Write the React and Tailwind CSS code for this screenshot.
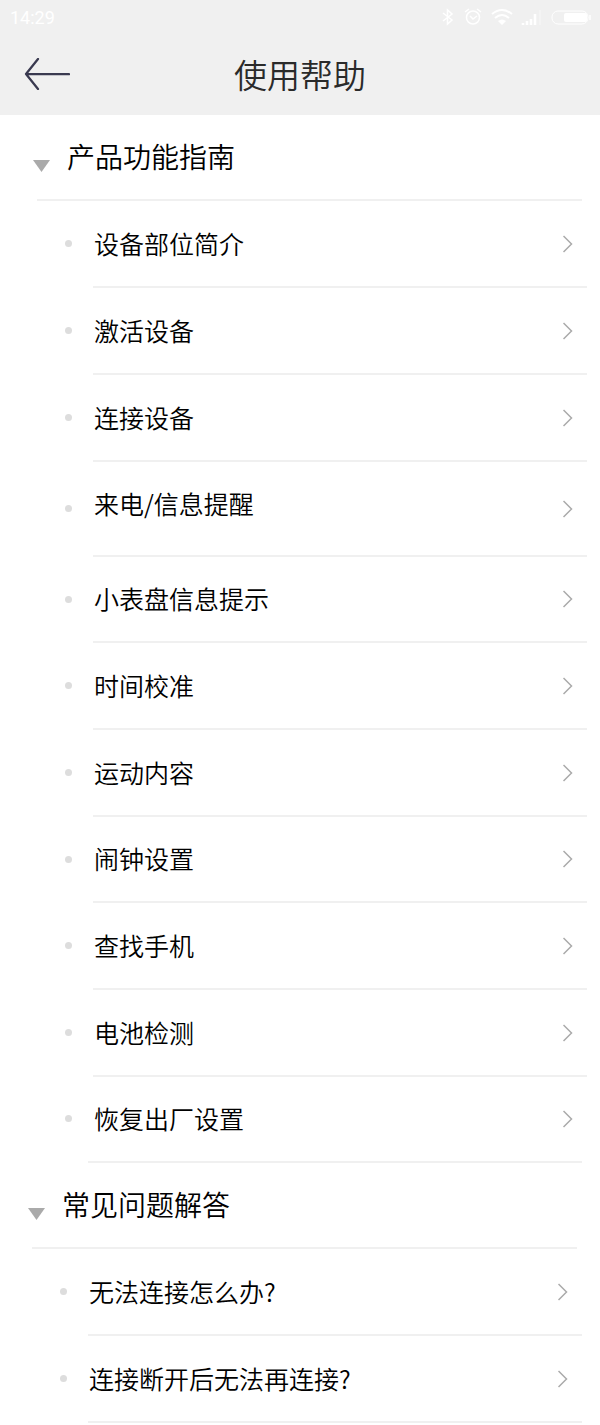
const sections = [
  {
    title: "产品功能指南",
    items: [
      { label: "设备部位简介" },
      { label: "激活设备" },
      { label: "连接设备" },
      { label: "来电/信息提醒", tall: true },
      { label: "小表盘信息提示" },
      { label: "时间校准" },
      { label: "运动内容" },
      { label: "闹钟设置" },
      { label: "查找手机" },
      { label: "电池检测" },
      { label: "恢复出厂设置", last: true },
    ],
  },
  {
    title: "常见问题解答",
    items: [{ label: "无法连接怎么办?" }, { label: "连接断开后无法再连接?" }],
  },
];

function rowClass(item) {
  if (item.tall) return "flex h-[95px] items-center";
  if (item.last) return "flex h-[84px] items-center";
  return "flex h-[87px] items-center nth-[3n+5]:h-[86px]";
}

function StatusBar() {
  return (
    <div className="flex h-[34px] items-center justify-between pl-[10px] pr-2 font-[Roboto,sans-serif] text-[18px] text-white">
      <span>14:29</span>
      <svg width="152" height="20" viewBox="0 0 152 20" fill="none" stroke="white" strokeWidth="1.5">
        {/* Bluetooth */}
        <path d="M3 6l9 7-4.500 4V3l4.500 4-9 7" />
        {/* Alarm */}
        <circle cx="33" cy="10.500" r="6.500" />
        <path d="M30 9l3 3 4-3M25 5l4-3M41 5l-4-3" />
        {/* Wifi */}
        <path d="M52 7q10-8 20 0M55 11q7-6 14 0" strokeWidth="2" />
        <path d="M58 14q4-3 8 0l-4 4z" fill="white" stroke="none" />
        {/* Signal */}
        <path d="M83 18v-2M87 18v-4M91 18v-6M95 18V7" strokeWidth="2.5" />
        <path d="M100 18V3" strokeWidth="1" opacity="0.5" />
        {/* Battery */}
        <rect x="112" y="4" width="36" height="13" rx="6" strokeWidth="1" />
        <rect x="124" y="6" width="23" height="9" rx="2" fill="white" stroke="none" />
        <path d="M150 8v5" />
      </svg>
    </div>
  );
}

function Section({ section, className }) {
  return (
    <section className={className}>
      <h2 className="ml-8 mr-[18px] border-b-2 border-[#f0f0f0]">
        <button className="-ml-1 flex h-[84px] items-center pb-0.5 text-[28px] font-[350] leading-10">
          <svg className="mt-5 shrink-0" width="17" height="12" viewBox="0 0 17 12">
            <path d="M0 0h17L8.5 12z" fill="#aaaaaa" />
          </svg>
          <span className="ml-[17px]">{section.title}</span>
        </button>
      </h2>

      <ul>
        {section.items.map((item) => (
          <li key={item.label} className={rowClass(item)}>
            <span className="mb-0.5 ml-[60px] mr-[21px] size-[7px] shrink-0 rounded-full bg-[#dddddd]" />
            <a
              href="#"
              className={
                item.last
                  ? "mr-[13px] flex h-full flex-1 items-center justify-between pr-[14px] text-[25px] font-[350] leading-9"
                  : "mr-[13px] flex h-full flex-1 items-center justify-between border-b-2 border-[#f0f0f0] pr-[14px] text-[25px] font-[350] leading-9"
              }
            >
              <span className={item.tall ? "pb-3 pl-px" : "pb-0.5 pl-px"}>{item.label}</span>
              <svg width="10" height="18" viewBox="0 0 10 18" fill="none">
                <path d="M0.5 1l8 8-8 8" stroke="#aaaaaa" strokeWidth="1.5" />
              </svg>
            </a>
          </li>
        ))}
      </ul>
    </section>
  );
}

export default function App() {
  return (
    <div className="min-h-screen bg-white font-['Noto_Sans_CJK_SC',sans-serif] text-black">
      <header className="bg-[#f0f0f0]">
        <StatusBar />
        <div className="grid h-[81px] grid-cols-[1fr_auto_1fr] items-center pb-0.5">
          <button aria-label="返回" className="ml-6 justify-self-start">
            <svg width="46" height="32" viewBox="0 0 46 32" fill="none">
              <path
                d="M14 1L2 16l12 15M2 16h43"
                stroke="#3a3a50"
                strokeWidth="2.25"
                strokeLinecap="round"
                strokeLinejoin="round"
              />
            </svg>
          </button>
          <h1 className="text-[33px] font-[350] leading-[48px] text-[#2a2a2a]">使用帮助</h1>
        </div>
      </header>

      <main>
        <Section section={sections[0]} className="pl-[5px]" />
        <hr className="ml-[88px] mr-[18px] border-t-2 border-[#f0f0f0]" />
        <Section section={sections[1]} className="pr-[5px]" />
      </main>
    </div>
  );
}
